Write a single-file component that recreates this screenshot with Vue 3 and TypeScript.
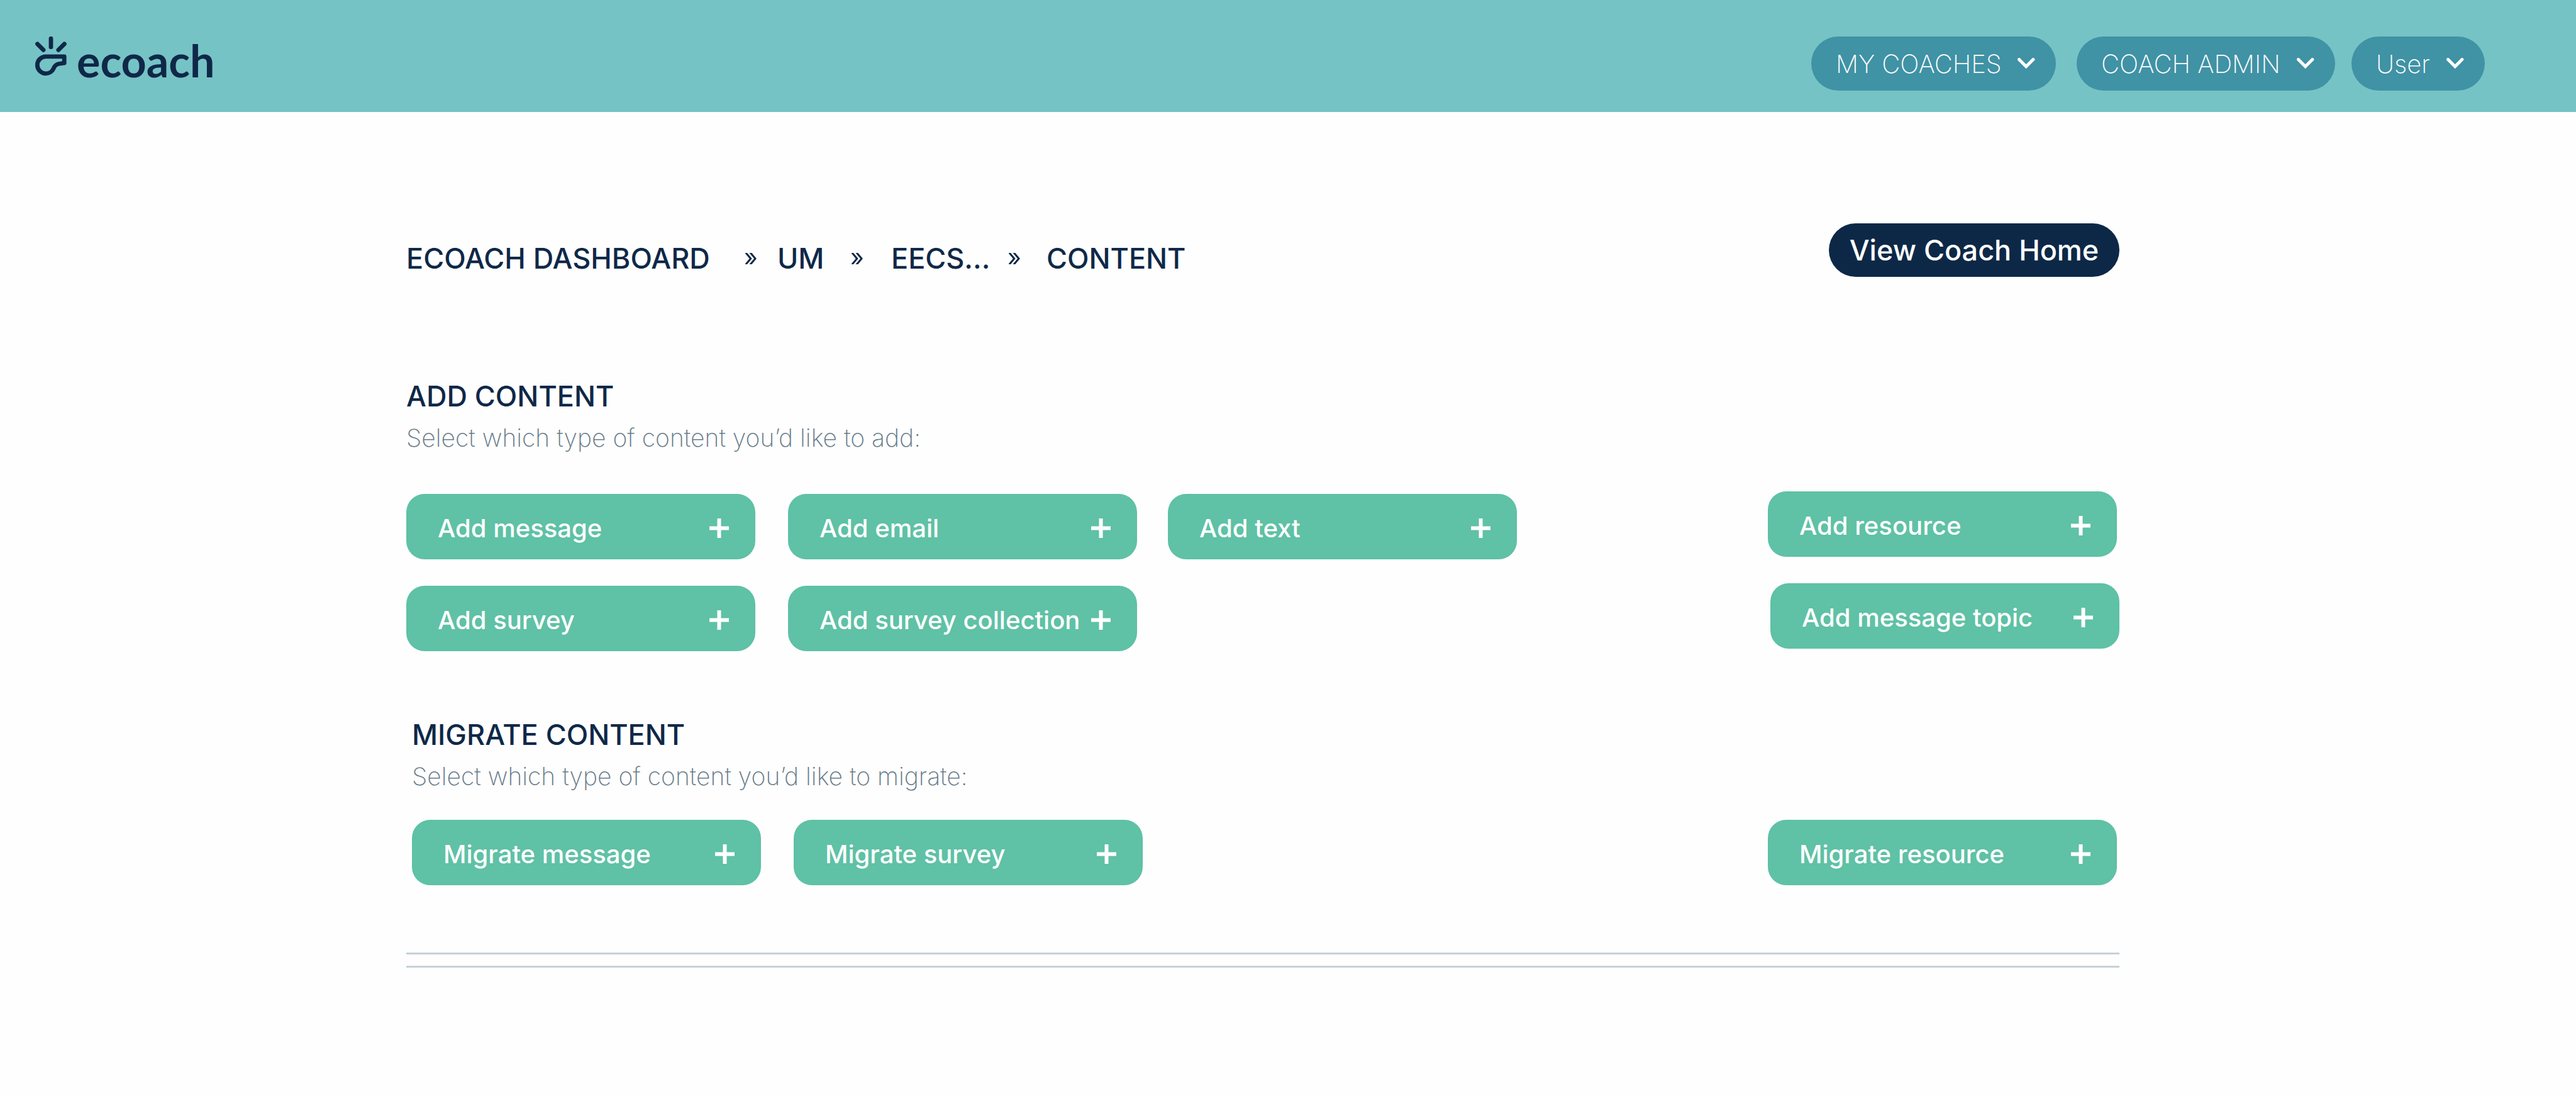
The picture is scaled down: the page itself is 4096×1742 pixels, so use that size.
<script setup lang="ts">
interface Crumb { label: string; href: string }

const crumbs: Crumb[] = [
  { label: 'ECOACH DASHBOARD', href: '#dashboard' },
  { label: 'UM', href: '#um' },
  { label: 'EECS...', href: '#eecs' },
  { label: 'CONTENT', href: '#content' },
]

const menus = [
  { label: 'MY COACHES', kind: 'coaches' },
  { label: 'COACH ADMIN', kind: 'admin' },
]

const sections = [
  {
    id: 'add',
    title: 'ADD CONTENT',
    hint: 'Select which type of content you’d like to add:',
    main: ['Add message', 'Add email', 'Add text', 'Add survey', 'Add survey collection'],
    side: ['Add resource', 'Add message topic'],
  },
  {
    id: 'migrate',
    title: 'MIGRATE CONTENT',
    hint: 'Select which type of content you’d like to migrate:',
    main: ['Migrate message', 'Migrate survey'],
    side: ['Migrate resource'],
  },
]
</script>

<template>
  <div class="page">
    <header class="topbar">
      <a class="brand" href="#home">
        <svg class="whistle" viewBox="0 0 50 64" aria-hidden="true">
          <path d="M25 3.200V16.700M3.500 11.800L13 21.400M46.400 11.800L36.900 21.400" />
          <path d="M16.900 31.800H46.200V42.200L37.500 43.500C32.500 44.400 30.700 47.200 29.500 50.200C27.300 55.500 22.500 58.900 16.900 58.900A13.500 13.500 0 0 1 16.900 31.800Z" />
        </svg>
        <span class="wordmark">ecoach</span>
      </a>
      <nav class="menus" aria-label="Main">
        <div class="group">
          <button v-for="m in menus" :key="m.kind" type="button" class="pill" :class="m.kind">
            {{ m.label }}
            <svg class="chevron" viewBox="0 0 28 18" aria-hidden="true"><path d="M2.500 2.500L13.700 13.700L24.900 2.500" /></svg>
          </button>
        </div>
        <button type="button" class="pill user">
          User
          <svg class="chevron" viewBox="0 0 28 18" aria-hidden="true"><path d="M2.500 2.500L13.700 13.700L24.900 2.500" /></svg>
        </button>
      </nav>
    </header>

    <main class="content">
      <div class="heading">
        <nav aria-label="Breadcrumb">
          <ol class="crumbs">
            <template v-for="(c, i) in crumbs" :key="c.label">
              <li v-if="i > 0" class="sep" aria-hidden="true">
                <svg viewBox="0 0 18 18"><path d="M0.300 -1L8.700 9L0.300 19M7.600 -1L16 9L7.600 19" /></svg>
              </li>
              <li><a :href="c.href">{{ c.label }}</a></li>
            </template>
          </ol>
        </nav>
        <a class="home" href="#coach-home">View Coach Home</a>
      </div>

      <section v-for="s in sections" :key="s.id" :class="['section', s.id]">
        <h2>{{ s.title }}</h2>
        <p>{{ s.hint }}</p>
        <div class="choices">
          <div class="grid">
            <button v-for="b in s.main" :key="b" type="button" class="choice">
              {{ b }}
              <svg class="plus" viewBox="0 0 31 31" aria-hidden="true"><path d="M15.500 0V31M0 15.500H31" /></svg>
            </button>
          </div>
          <div class="side">
            <button v-for="b in s.side" :key="b" type="button" class="choice">
              {{ b }}
              <svg class="plus" viewBox="0 0 31 31" aria-hidden="true"><path d="M15.500 0V31M0 15.500H31" /></svg>
            </button>
          </div>
        </div>
      </section>

      <div class="rules" aria-hidden="true"></div>
    </main>
  </div>
</template>

<style>
body {
  margin: 0;
  background: #fefefe;
}
</style>

<style scoped>
.page {
  font-family: Inter, "Open Sans", sans-serif;
  color: #0f2848;
}
a {
  color: inherit;
  text-decoration: none;
}
button {
  border: 0;
  font-family: inherit;
  white-space: nowrap;
  cursor: pointer;
}
svg {
  display: block;
  flex: none;
}
.topbar {
  display: flex;
  justify-content: space-between;
  align-items: flex-start;
  box-sizing: border-box;
  height: 178px;
  padding: 58px 145px 0 56px;
  background: #76c3c5;
}
.brand {
  display: flex;
  gap: 16px;
  height: 64px;
}
.whistle {
  width: 50px;
  height: 64px;
  fill: none;
  stroke: currentColor;
  stroke-width: 6.8;
  stroke-linecap: round;
  stroke-linejoin: round;
}
.wordmark {
  font-family: Lato, sans-serif;
  font-weight: 700;
  font-size: 70px;
  line-height: 76px;
}
.menus {
  display: flex;
  gap: 26px;
}
.group {
  display: flex;
  gap: 33px;
}
.pill {
  display: flex;
  justify-content: space-between;
  align-items: center;
  box-sizing: border-box;
  height: 86px;
  padding: 0 33px 0 39px;
  border-radius: 43px;
  background: #4092a5;
  color: #fff;
  font-size: 40px;
  font-weight: 200;
}
.coaches {
  width: 389px;
}
.admin {
  width: 411px;
}
.user {
  width: 212px;
}
.chevron {
  width: 28px;
  height: 18px;
  fill: none;
  stroke: currentColor;
  stroke-width: 5;
  stroke-linecap: round;
}
.content {
  padding: 177px 726px 0 646px;
}
.heading {
  display: flex;
  justify-content: space-between;
  align-items: flex-start;
  height: 249px;
}
.crumbs {
  display: grid;
  grid-template-columns: 539px 51px 118px 63px 187px 60px auto;
  align-items: center;
  margin: 0;
  padding: 30px 0 0;
  list-style: none;
  font-size: 45px;
  line-height: 52px;
  font-weight: 500;
  white-space: nowrap;
}
.sep svg {
  width: 18px;
  height: 18px;
  fill: none;
  stroke: currentColor;
  stroke-width: 3;
}
.home {
  box-sizing: border-box;
  width: 462px;
  border-radius: 43px;
  background: #0d2847;
  color: #fff;
  font-size: 45px;
  line-height: 85px;
  font-weight: 500;
  text-align: center;
  white-space: nowrap;
}
h2 {
  margin: 0;
  font-size: 45px;
  line-height: 52px;
  font-weight: 500;
}
p {
  margin: 18px 0 0;
  color: #687b89;
  font-size: 39px;
  line-height: 44px;
  font-weight: 200;
}
.choices {
  display: flex;
  justify-content: space-between;
  align-items: flex-start;
}
.add .choices {
  margin-top: 67px;
}
.migrate {
  margin-top: 107px;
  padding-left: 9px;
}
.migrate .choices {
  margin-top: 47px;
}
.grid {
  display: grid;
  grid-template-columns: 607px 604px 555px;
  row-gap: 42px;
}
.side {
  display: flex;
  flex-direction: column;
  align-items: flex-end;
  gap: 42px;
  width: 559px;
}
.side .choice:first-child {
  align-self: flex-start;
}
.add .side {
  margin-top: -4px;
}
.choice {
  display: flex;
  justify-content: space-between;
  align-items: center;
  box-sizing: border-box;
  width: 555px;
  height: 104px;
  padding: 4px 42px 0 50px;
  border-radius: 29px;
  background: #5fc1a5;
  color: #fff;
  font-size: 40px;
  font-weight: 500;
}
.plus {
  width: 31px;
  height: 31px;
  stroke: currentColor;
  stroke-width: 6;
}
.rules {
  height: 18px;
  margin-top: 107px;
  border-top: 3px solid #c6d1d8;
  border-bottom: 3px solid #c6d1d8;
}
</style>
